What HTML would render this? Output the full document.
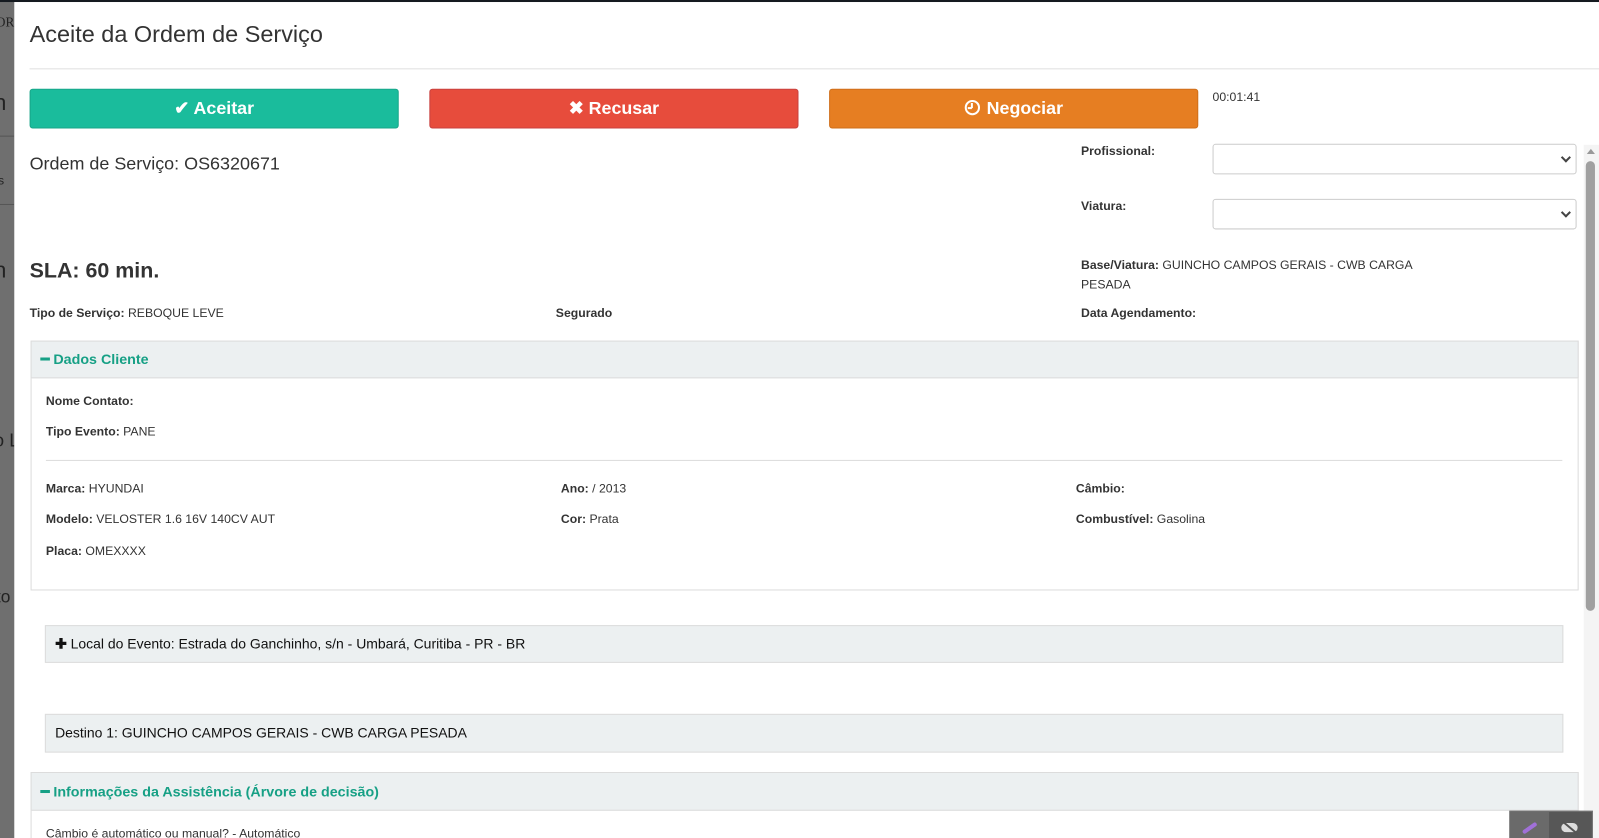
<!DOCTYPE html>
<html><head><meta charset="utf-8">
<style>
html,body{margin:0;padding:0;width:1599px;height:838px;overflow:hidden;background:#6f6f6f;}
#w{position:absolute;left:0;top:0;width:1568px;height:822px;overflow:hidden;transform:scale(1.0198);transform-origin:0 0;font-family:"Liberation Sans",Arial,sans-serif;color:#333;}
.a{position:absolute;white-space:nowrap;}
#bg{position:absolute;left:0;top:0;width:14px;height:822px;background:#6f6f6f;overflow:hidden;}
#top{position:absolute;left:0;top:0;width:1568px;height:2px;background:#151a20;}
#modal{position:absolute;left:14px;top:2px;width:1554px;height:820px;background:#fff;}
.btn{position:absolute;top:87px;height:37px;width:360px;border-radius:3px;color:#fff;font-weight:bold;font-size:17.5px;text-align:center;line-height:37px;}
.lbl{font-size:12px;font-weight:bold;color:#333;}
.v{font-weight:normal;}
.sel{position:absolute;left:1189px;width:355px;height:28px;border:1px solid #ccc;border-radius:3px;background:#fff;}
.sel::after{content:"";position:absolute;right:6px;top:9px;width:5px;height:5px;border-right:2px solid #444;border-bottom:2px solid #444;transform:rotate(45deg);}
.box{position:absolute;background:#ecf0f1;border:1px solid #dcdcdc;}
.ph{color:#16a085;font-weight:bold;font-size:14px;}
</style></head><body><div id="w">
<div id="bg">
<div class="a" style="left:-4px;top:14px;font-size:13px;color:#222;font-family:'Liberation Serif',serif">ORA</div>
<div class="a" style="left:-6px;top:88px;font-size:22px;color:#222">n</div>
<div class="a" style="left:-2px;top:170px;font-size:12px;color:#222">s</div>
<div class="a" style="left:-6px;top:252px;font-size:22px;color:#222">n</div>
<div class="a" style="left:-6px;top:422px;font-size:18px;color:#222">o L</div>
<div class="a" style="left:-4px;top:576px;font-size:17px;color:#222">to</div>
<div style="position:absolute;left:0;top:133px;width:14px;height:1px;background:#555"></div>
<div style="position:absolute;left:0;top:200px;width:14px;height:1px;background:#555"></div>
</div>
<div id="top"></div>
<div id="modal"></div>

<div class="a" style="left:29px;top:20px;font-size:23px;color:#333">Aceite da Ordem de Serviço</div>
<div style="position:absolute;left:29px;top:67px;width:1539px;height:1px;background:#e0e0e0"></div>

<div class="btn" style="left:29px;background:#1abc9c;border:1px solid #18a689">✔ Aceitar</div>
<div class="btn" style="left:421px;background:#e74c3c;border:1px solid #c9413f">✖ Recusar</div>
<div class="btn" style="left:813px;background:#e67e22;border:1px solid #cf6f1a"><span style="display:inline-block;width:11px;height:11px;border:2px solid #fff;border-radius:50%;vertical-align:-1px;position:relative;margin-right:2px"><span style="position:absolute;left:4px;top:1px;width:2px;height:5px;background:#fff"></span><span style="position:absolute;left:1px;top:5px;width:4px;height:2px;background:#fff"></span></span> Negociar</div>
<div class="a" style="left:1189px;top:88px;font-size:12px;color:#333">00:01:41</div>

<div class="a" style="left:29px;top:150px;font-size:17.6px;color:#333">Ordem de Serviço: OS6320671</div>
<div class="a lbl" style="left:1060px;top:141px">Profissional:</div>
<div class="sel" style="top:141px"></div>
<div class="a lbl" style="left:1060px;top:195px">Viatura:</div>
<div class="sel" style="top:195px"></div>

<div class="a" style="left:29px;top:254px;font-size:21px;font-weight:bold;color:#333">SLA: 60 min.</div>
<div class="a lbl" style="left:1060px;top:251px;line-height:19px">Base/Viatura: <span class="v">GUINCHO CAMPOS GERAIS - CWB CARGA</span><br><span class="v">PESADA</span></div>
<div class="a lbl" style="left:29px;top:300px">Tipo de Serviço: <span class="v">REBOQUE LEVE</span></div>
<div class="a lbl" style="left:545px;top:300px">Segurado</div>
<div class="a lbl" style="left:1060px;top:300px">Data Agendamento:</div>

<div style="position:absolute;left:30px;top:334px;width:1516px;height:243px;border:1px solid #dcdcdc;background:#fff"></div>
<div class="box" style="left:30px;top:334px;width:1516px;height:35px;"></div>
<div class="a ph" style="left:40px;top:344px">━ Dados Cliente</div>
<div class="a lbl" style="left:45px;top:386px">Nome Contato:</div>
<div class="a lbl" style="left:45px;top:416px">Tipo Evento: <span class="v">PANE</span></div>
<div style="position:absolute;left:45px;top:451px;width:1487px;height:1px;background:#ddd"></div>
<div class="a lbl" style="left:45px;top:472px">Marca: <span class="v">HYUNDAI</span></div>
<div class="a lbl" style="left:45px;top:502px">Modelo: <span class="v">VELOSTER 1.6 16V 140CV AUT</span></div>
<div class="a lbl" style="left:45px;top:533px">Placa: <span class="v">OMEXXXX</span></div>
<div class="a lbl" style="left:550px;top:472px">Ano: <span class="v">/ 2013</span></div>
<div class="a lbl" style="left:550px;top:502px">Cor: <span class="v">Prata</span></div>
<div class="a lbl" style="left:1055px;top:472px">Câmbio:</div>
<div class="a lbl" style="left:1055px;top:502px">Combustível: <span class="v">Gasolina</span></div>

<div class="box" style="left:44px;top:613px;width:1487px;height:35px"></div>
<div class="a" style="left:54px;top:624px;font-size:13.7px;color:#111"><b>✚</b> Local do Evento: Estrada do Ganchinho, s/n - Umbará, Curitiba - PR - BR</div>
<div class="box" style="left:44px;top:700px;width:1487px;height:36px"></div>
<div class="a" style="left:54px;top:711px;font-size:13.7px;color:#111">Destino 1: GUINCHO CAMPOS GERAIS - CWB CARGA PESADA</div>

<div style="position:absolute;left:30px;top:757px;width:1516px;height:80px;border:1px solid #dcdcdc;background:#fff"></div>
<div class="box" style="left:30px;top:757px;width:1516px;height:36px"></div>
<div class="a ph" style="left:40px;top:768px">━ Informações da Assistência (Árvore de decisão)</div>
<div class="a" style="left:45px;top:810px;font-size:12px;color:#333">Câmbio é automático ou manual? - Automático</div>

<div style="position:absolute;left:1553px;top:142px;width:15px;height:680px;background:#f4f4f4"></div>
<div style="position:absolute;left:1556px;top:146px;width:0;height:0;border-left:4px solid transparent;border-right:4px solid transparent;border-bottom:5px solid #999"></div>
<div style="position:absolute;left:1555px;top:158px;width:9px;height:441px;background:#a0a0a0;border-radius:5px"></div>

<div style="position:absolute;left:1480px;top:795px;width:80px;height:27px;background:#575757;border:1px solid #777"></div>
<div style="position:absolute;left:1481px;top:796px;width:38px;height:26px;background:#6a6a6a"></div>
<div style="position:absolute;left:1492px;top:810px;width:16px;height:4px;background:#a070d8;transform:rotate(-35deg);border-radius:2px"></div>
<div style="position:absolute;left:1531px;top:807px;width:16px;height:9px;background:#ddd;border-radius:5px"></div>
<div style="position:absolute;left:1530px;top:811px;width:20px;height:2px;background:#555;transform:rotate(40deg)"></div>
</div></body></html>
